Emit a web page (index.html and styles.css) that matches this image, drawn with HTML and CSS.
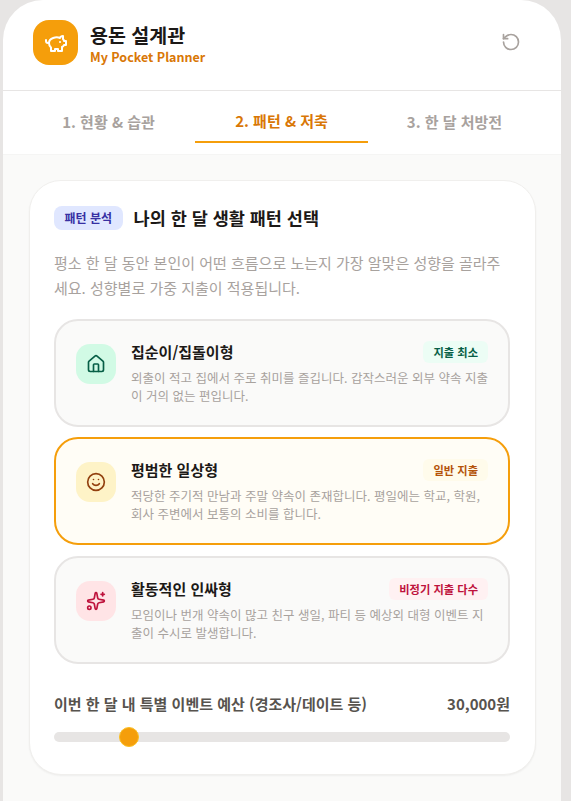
FILE: index.html
```html
<!DOCTYPE html>
<html lang="ko">
<head>
    <meta charset="UTF-8">
    <meta name="viewport" content="width=device-width, initial-scale=1.0">
    <title>용돈 설계관 - My Pocket Planner</title>
    <link rel="stylesheet" href="styles.css">
</head>
<body>
    <div class="container">
        <div class="header">
            <div class="brand">
                <div class="logo">
                    <svg class="icon icon-logo" viewBox="0 0 24 24"><path d="M19 5c-1.5 0-2.8 1.4-3 2-3.5-1.5-11-.3-11 5 0 1.8 0 3 2 4.5V20h4v-2h3v2h4v-4c1-.5 1.7-1 2-2h2v-4h-2c0-1-.5-1.5-1-2V5z"/><path d="M2 9v1c0 1.1.9 2 2 2h1"/><path d="M16 11h.01"/></svg>
                </div>
                <div class="brand-text">
                    <h1>용돈 설계관</h1>
                    <p>My Pocket Planner</p>
                </div>
            </div>
            <button type="button" class="reset-btn">
                <svg class="icon icon-reset" viewBox="0 0 24 24"><path d="M3 12a9 9 0 1 0 9-9 9.75 9.75 0 0 0-6.74 2.74L3 8"/><path d="M3 3v5h5"/></svg>
            </button>
        </div>

        <ul class="tabs">
            <li>1. 현황 &amp; 습관</li>
            <li class="active">2. 패턴 &amp; 저축</li>
            <li>3. 한 달 처방전</li>
        </ul>

        <div class="main-content">
            <div class="card">
                <div class="card-title">
                    <span class="chip">패턴 분석</span>
                    <h2>나의 한 달 생활 패턴 선택</h2>
                </div>
                <p class="card-desc">평소 한 달 동안 본인이 어떤 흐름으로 노는지 가장 알맞은 성향을 골라주세요. 성향별로 가중 지출이 적용됩니다.</p>

                <div class="option-list">
                    <div class="option">
                        <div class="option-icon green">
                            <svg class="icon" viewBox="0 0 24 24"><path d="M15 21v-8a1 1 0 0 0-1-1h-4a1 1 0 0 0-1 1v8"/><path d="M3 10a2 2 0 0 1 .709-1.528l7-5.999a2 2 0 0 1 2.582 0l7 5.999A2 2 0 0 1 21 10v9a2 2 0 0 1-2 2H5a2 2 0 0 1-2-2z"/></svg>
                        </div>
                        <div class="option-body">
                            <div class="option-head">
                                <h3>집순이/집돌이형</h3>
                                <span class="tag green">지출 최소</span>
                            </div>
                            <p>외출이 적고 집에서 주로 취미를 즐깁니다. 갑작스러운 외부 약속 지출이 거의 없는 편입니다.</p>
                        </div>
                    </div>

                    <div class="option selected">
                        <div class="option-icon amber">
                            <svg class="icon" viewBox="0 0 24 24"><circle cx="12" cy="12" r="10"/><path d="M8 14s1.5 2 4 2 4-2 4-2"/><path d="M9 9h.01"/><path d="M15 9h.01"/></svg>
                        </div>
                        <div class="option-body">
                            <div class="option-head">
                                <h3>평범한 일상형</h3>
                                <span class="tag amber">일반 지출</span>
                            </div>
                            <p>적당한 주기적 만남과 주말 약속이 존재합니다. 평일에는 학교, 학원, 회사 주변에서 보통의 소비를 합니다.</p>
                        </div>
                    </div>

                    <div class="option">
                        <div class="option-icon rose">
                            <svg class="icon" viewBox="0 0 24 24"><path d="M11.017 2.814a1 1 0 0 1 1.966 0l1.051 5.558a2 2 0 0 0 1.594 1.594l5.558 1.051a1 1 0 0 1 0 1.966l-5.558 1.051a2 2 0 0 0-1.594 1.594l-1.051 5.558a1 1 0 0 1-1.966 0l-1.051-5.558a2 2 0 0 0-1.594-1.594l-5.558-1.051a1 1 0 0 1 0-1.966l5.558-1.051a2 2 0 0 0 1.594-1.594z"/><path d="M20 2v4"/><path d="M22 4h-4"/><circle cx="4" cy="20" r="2"/></svg>
                        </div>
                        <div class="option-body">
                            <div class="option-head">
                                <h3>활동적인 인싸형</h3>
                                <span class="tag rose">비정기 지출 다수</span>
                            </div>
                            <p>모임이나 번개 약속이 많고 친구 생일, 파티 등 예상외 대형 이벤트 지출이 수시로 발생합니다.</p>
                        </div>
                    </div>
                </div>

                <div class="budget">
                    <div class="budget-head">
                        <label for="budget-range">이번 한 달 내 특별 이벤트 예산 (경조사/데이트 등)</label>
                        <span>30,000원</span>
                    </div>
                    <input type="range" id="budget-range" min="0" max="200000" step="10000" value="30000">
                </div>
            </div>
        </div>
    </div>
</body>
</html>
```

FILE: styles.css
```css
* { box-sizing: border-box; }
html, body { height: 100%; }
body { font-family: "Noto Sans CJK KR", "Noto Sans", sans-serif; background-color: #e7e5e4; color: #1c1917; margin: 0; padding: 0 10px 0 3px; overflow: hidden; }
.container { background-color: #fff; border-radius: 40px 40px 0 0; overflow: hidden; min-height: 100%; }
.icon { width: 24px; height: 24px; fill: none; stroke: currentColor; stroke-width: 2; stroke-linecap: round; stroke-linejoin: round; display: block; }

.header { height: 91px; padding: 20px 30px 0; display: flex; justify-content: space-between; align-items: flex-start; border-bottom: 1px solid #e7e5e4; }
.brand { display: flex; align-items: center; gap: 12px; }
.logo { width: 45px; height: 45px; border-radius: 16px; background-color: #f59e0b; color: #fff; display: flex; justify-content: center; align-items: center; }
.brand-text h1 { margin: 0; font-size: 19.5px; line-height: 28px; font-weight: 700; color: #1c1917; }
.brand-text p { margin: 0; font-size: 12.5px; line-height: 16px; font-weight: 700; color: #d97706; }
.reset-btn { border: none; background: none; padding: 0; color: #a8a29e; cursor: pointer; margin: 12px 10px 0 0; }
.icon-reset { width: 20px; height: 20px; }

.tabs { list-style: none; margin: 0; padding: 0 20px 0 19px; height: 63px; display: flex; }
.tabs li { flex: 1; display: flex; justify-content: center; align-items: center; padding-top: 8px; height: 52px; font-size: 15px; font-weight: 700; color: #a8a29e; }
.tabs li.active { color: #d97706; border-bottom: 2px solid #f59e0b; }

.main-content { background-color: #fafaf9; border-top: 1px solid #f5f5f4; padding: 25px 25px 26px 26px; }
.card { background-color: #fff; border: 1px solid #f0efed; border-radius: 32px; padding: 25px 25px 32px 24px; box-shadow: 0 1px 2px rgba(0,0,0,0.05); }
.card-title { display: flex; align-items: center; gap: 11px; }
.chip { background-color: #e0e7ff; color: #3730a3; font-size: 12px; font-weight: 700; line-height: 16px; padding: 4px 10.5px; border-radius: 8px; }
.card-title h2 { margin: 0; font-size: 17.5px; line-height: 24px; font-weight: 700; color: #1c1917; }
.card-desc { margin: 20px 0 18.8px; font-size: 15px; line-height: 25px; color: #a8a29e; }

.option-list { display: flex; flex-direction: column; gap: 10.5px; }
.option { height: 108px; padding: 20px; border: 2px solid #e7e5e4; border-radius: 24px; background-color: #fafaf9; display: flex; align-items: flex-start; gap: 15px; }
.option.selected { border-color: #f59e0b; background-color: #fffdf6; }
.option-icon { width: 40px; height: 40px; margin-top: 3px; flex-shrink: 0; border-radius: 14px; display: flex; justify-content: center; align-items: center; }
.option-icon .icon { width: 20px; height: 20px; }
.option-icon.green { background-color: #d1fae5; color: #065f46; }
.option-icon.amber { background-color: #fef3c7; color: #92400e; }
.option-icon.rose { background-color: #ffe4e6; color: #be123c; }
.option-body { flex: 1; min-width: 0; }
.option-head { display: flex; justify-content: space-between; align-items: center; margin-bottom: 6px; }
.option-head h3 { margin: 0; font-size: 15px; line-height: 20px; font-weight: 700; color: #1c1917; }
.tag { font-size: 11.25px; line-height: 14px; font-weight: 700; padding: 4px 10px; border-radius: 6px; }
.tag.green { background-color: #ecfdf5; color: #065f46; }
.tag.amber { background-color: #fffbeb; color: #b45309; }
.tag.rose { background-color: #fff1f2; color: #be123c; }
.option-body p { margin: 0; font-size: 12.5px; line-height: 18px; color: #a8a29e; }

.budget { margin-top: 30.2px; }
.budget-head { display: flex; justify-content: space-between; align-items: center; font-size: 15px; line-height: 20px; font-weight: 700; color: #57534e; margin-bottom: 18px; }
.budget input[type=range] { -webkit-appearance: none; appearance: none; display: block; width: 100%; height: 10px; margin: 0; border-radius: 5px; background-color: #e7e5e4; outline: none; }
.budget input[type=range]::-webkit-slider-thumb { -webkit-appearance: none; width: 20px; height: 20px; border-radius: 50%; background-color: #f59e0b; border: 1px solid #fbbf24; cursor: pointer; }
```
